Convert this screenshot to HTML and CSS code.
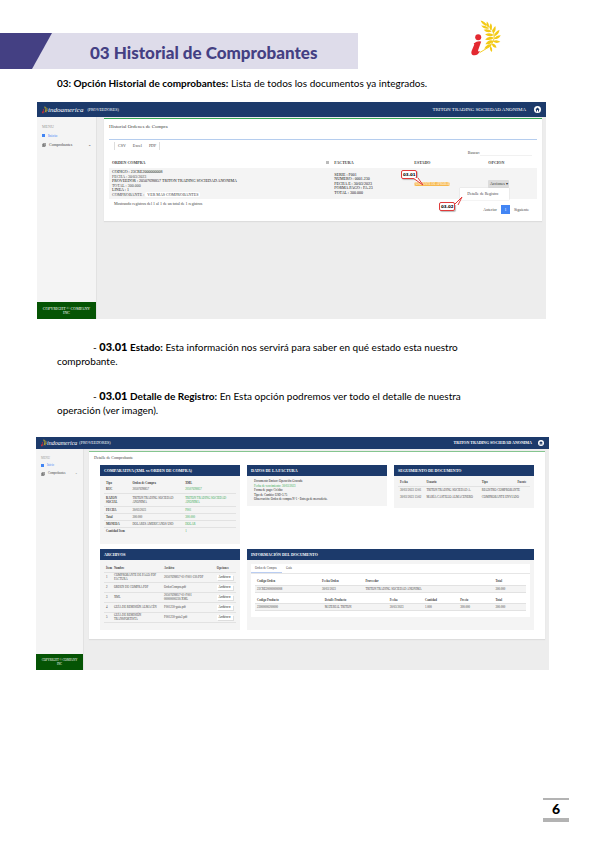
FILE: index.html
```html
<!DOCTYPE html>
<html lang="es">
<head>
<meta charset="utf-8">
<title>03 Historial de Comprobantes</title>
<link rel="stylesheet" href="styles.css">
</head>
<body>
<svg class="defs" aria-hidden="true">
  <symbol id="brand" viewBox="0 0 100 120">
    <circle cx="24" cy="56" r="10" fill="#e32931"/>
    <path d="M9 77Q22 66 34 70L24 98Q22 106 30 102Q24 116 12 116Q-2 116 2 102L11 80Z" fill="#e32931"/>
    <path d="M29 107Q88 78 76 42Q66 17 34 3" fill="none" stroke="#f3ca16" stroke-width="3"/>
    <g fill="#f3ca16">
      <path d="M32 0Q49 4 53 19Q39 16 32 0Z"/><path d="M34 17Q51 17 60 27Q44 31 34 17Z"/><path d="M42 31Q58 26 69 37Q53 44 42 31Z"/><path d="M47 47Q62 37 76 48Q62 57 47 47Z"/><path d="M47 63Q61 48 77 58Q64 69 47 63Z"/><path d="M48 79Q59 61 75 68Q64 82 48 79Z"/><path d="M44 94Q54 75 70 80Q61 94 44 94Z"/>
      <path d="M53 3Q63 12 58 25Q49 15 53 3Z"/><path d="M66 9Q74 21 66 34Q58 21 66 9Z"/><path d="M81 18Q86 33 73 43Q69 29 81 18Z"/><path d="M95 31Q94 46 77 53Q78 38 95 31Z"/><path d="M99 49Q94 62 77 62Q82 49 99 49Z"/><path d="M98 71Q85 79 73 70Q84 61 98 71Z"/><path d="M85 91Q71 91 69 77Q82 77 85 91Z"/><path d="M69 105Q60 96 64 84Q74 94 69 105Z"/>
    </g>
  </symbol>
  <symbol id="home" viewBox="0 0 14 14">
    <circle cx="7" cy="7" r="7" fill="#fff"/>
    <path d="M2.500 7L7 3L11.500 7H10V11H8V8H6V11H4V7Z" fill="#1c3a6b"/>
  </symbol>
  <symbol id="docs" viewBox="0 0 12 12">
    <path d="M4 1H11V9H4ZM1 4H8V11H1Z" fill="#ddd" stroke="#555" stroke-width="1.500"/>
    <path d="M3 7H6M3 9H6" stroke="#555"/>
  </symbol>
</svg>

<header class="top">
  <div class="banner"><h1>03 Historial de Comprobantes</h1></div>
  <svg class="logo" role="img" aria-label="Indoamerica"><use href="#brand"/></svg>
</header>

<main>
  <p class="lead"><b>03: Opción Historial de comprobantes:</b> Lista de todos los documentos ya integrados.</p>

  <section class="app app-list">
    <div class="bar">
      <svg class="mark" aria-hidden="true"><use href="#brand"/></svg>
      <span class="brand">indoamerica</span><span class="role">(PROVEEDORES)</span>
      <span class="company">TRITON TRADING SOCIEDAD ANONIMA</span>
      <svg class="home" aria-hidden="true"><use href="#home"/></svg>
    </div>
    <nav class="side">
      <span class="menu-title">MENU</span>
      <a class="active" href="#"><i class="square"></i>Inicio</a>
      <a href="#"><svg class="ico" aria-hidden="true"><use href="#docs"/></svg>Comprobantes<span class="chev">⌄</span></a>
      <div class="side-foot">COPYRIGHT © COMPANY<br>INC</div>
    </nav>
    <div class="card">
      <h2>Historial Ordenes de Compra</h2>
      <div class="list">
        <div class="exports"><button>CSV</button><button>Excel</button><button>PDF</button></div>
        <div class="search"><label for="q">Buscar:</label><input id="q" type="text"></div>
        <table class="orders">
          <colgroup><col class="w51"><col class="w18"><col class="w18"><col></colgroup>
          <thead><tr><th>ORDEN COMPRA</th><th><i class="tick"></i>FACTURA</th><th>ESTADO</th><th>OPCION</th></tr></thead>
          <tbody><tr>
            <td><div class="lines six"><b>CODIGO : 23CRE2000000008</b><span>FECHA : 30/03/2023</span><b>PROVEEDOR : 20507698857 TRITON TRADING SOCIEDAD ANONIMA</b><span>TOTAL : 300.000</span><b>LINEA : 1</b><span>COMPROBANTE : <em>VER MAS COMPROBANTES</em></span></div></td>
            <td><div class="lines five"><b>SERIE : F001</b><b>NUMERO : 0001.230</b><b>FECHA E : 30/03/2023</b><b>FORMA PAGO : FA.23</b><b>TOTAL : 300.000</b></div></td>
            <td><div class="anchor"><span class="badge">PENDIENTE DE APROBAR</span>
              <div class="callout one">03.01<svg viewBox="0 0 12 8"><path d="M1 0L11 7L6 0" fill="#fff" stroke="#e03a3a"/></svg></div></div></td>
            <td><div class="anchor"><button class="action">Acciones ▾</button>
              <div class="drop"><a href="#">Detalle de Registro</a></div>
              <div class="callout two">03.02<svg viewBox="0 0 10 10"><path d="M1 9L9 1L5 9" fill="#fff" stroke="#e03a3a"/></svg></div></div></td>
          </tr></tbody>
        </table>
        <div class="table-foot"><span>Mostrando registros del 1 al 1 de un total de 1 registros</span>
          <div class="pager"><button>Anterior</button><button class="now">1</button><button>Siguiente</button></div></div>
      </div>
    </div>
  </section>

  <p class="note">- <strong>03.01</strong> <b>Estado:</b> Esta información nos servirá para saber en qué estado esta nuestro comprobante.</p>
  <p class="note">- <strong>03.01</strong> <b>Detalle de Registro:</b> En Esta opción podremos ver todo el detalle de nuestra operación (ver imagen).</p>

  <section class="app app-detail">
    <div class="bar">
      <svg class="mark" aria-hidden="true"><use href="#brand"/></svg>
      <span class="brand">indoamerica</span><span class="role">(PROVEEDORES)</span>
      <span class="company">TRITON TRADING SOCIEDAD ANONIMA</span>
      <svg class="home" aria-hidden="true"><use href="#home"/></svg>
    </div>
    <nav class="side">
      <span class="menu-title">MENU</span>
      <a class="active" href="#"><i class="square"></i>Inicio</a>
      <a href="#"><svg class="ico" aria-hidden="true"><use href="#docs"/></svg>Comprobantes<span class="chev">⌄</span></a>
      <div class="side-foot">COPYRIGHT © COMPANY<br>INC</div>
    </nav>
    <div class="card">
      <h2>Detalle de Comprobante</h2>
      <div class="panels">
        <article class="panel tall">
          <h3>COMPARATIVA (XML vs ORDEN DE COMPRA)</h3>
          <table class="compare">
            <colgroup><col class="w20"><col class="w40"><col></colgroup>
            <thead><tr><th>Tipo</th><th>Orden de Compra</th><th>XML</th></tr></thead>
            <tbody>
              <tr><th>RUC</th><td>20507698857</td><td>20507698857</td></tr>
              <tr><th>RAZON SOCIAL</th><td>TRITON TRADING SOCIEDAD ANONIMA</td><td>TRITON TRADING SOCIEDAD ANONIMA</td></tr>
              <tr><th>FECHA</th><td>30/03/2023</td><td>F001</td></tr>
              <tr><th>Total</th><td>300.000</td><td>300.000</td></tr>
              <tr><th>MONEDA</th><td>DOLARES AMERICANOS USD</td><td>DOLAR</td></tr>
              <tr><th>Cantidad Item</th><td></td><td>1</td></tr>
            </tbody>
          </table>
        </article>
        <article class="panel">
          <h3>DATOS DE LA FACTURA</h3>
          <div class="facts"><span>Documento Emisor: Operación Gravada</span><span class="green">Fecha de vencimiento: 30/03/2023</span><span>Forma de pago: Crédito</span><span>Tipo de Cambio: USD-3.75</span><span>Observación: Orden de compra N°1 - Entrega de mercadería.</span></div>
        </article>
        <article class="panel mid">
          <h3>SEGUIMIENTO DE DOCUMENTO</h3>
          <table class="track">
            <colgroup><col class="w20"><col class="w42"><col class="w27"><col></colgroup>
            <thead><tr><th>Fecha</th><th>Usuario</th><th>Tipo</th><th>Fuente</th></tr></thead>
            <tbody><tr><td>30/03/2023 12:01</td><td>TRITON TRADING SOCIEDAD A.</td><td>REGISTRO COMPROBANTE</td><td></td></tr>
            <tr><td>30/03/2023 13:02</td><td>MARÍA CASTILLO ALMACENERO</td><td>COMPROBANTE ENVIADO</td><td></td></tr></tbody>
          </table>
        </article>
        <article class="panel files-panel">
          <h3>ARCHIVOS</h3>
          <table class="files">
            <colgroup><col class="w6"><col class="w38"><col class="w40"><col></colgroup>
            <thead><tr><th>Ítem</th><th>Nombre</th><th>Archivo</th><th>Opciones</th></tr></thead>
            <tbody>
              <tr><td>1</td><td>COMPROBANTE DE PAGO PDF FACTURA</td><td>20507698857-01-F001-230.PDF</td><td><button>Archivo ▾</button></td></tr>
              <tr><td>2</td><td>ORDEN DE COMPRA PDF</td><td>OrdenCompra.pdf</td><td><button>Archivo ▾</button></td></tr>
              <tr><td>3</td><td>XML</td><td>20507698857-01-F001 00000000230.XML</td><td><button>Archivo ▾</button></td></tr>
              <tr><td>4</td><td>GUÍA DE REMISIÓN ALMACÉN</td><td>F001230-guia.pdf</td><td><button>Archivo ▾</button></td></tr>
              <tr><td>5</td><td>GUÍA DE REMISIÓN TRANSPORTISTA</td><td>F001230-guia2.pdf</td><td><button>Archivo ▾</button></td></tr>
            </tbody>
          </table>
        </article>
        <article class="panel wide">
          <h3>INFORMACIÓN DEL DOCUMENTO</h3>
          <div class="info">
            <div class="tabs"><a class="on" href="#">Orden de Compra</a><a href="#">Guía</a></div>
            <table>
              <colgroup><col class="w24"><col class="w16"><col class="w48"><col></colgroup>
              <thead><tr><th>Codigo Orden</th><th>Fecha Orden</th><th>Proveedor</th><th>Total</th></tr></thead>
              <tbody><tr><td>23CRE20000000008</td><td>30/03/2023</td><td>TRITON TRADING SOCIEDAD ANONIMA</td><td>300.000</td></tr></tbody>
            </table>
            <table>
              <colgroup><col class="w25"><col class="w24"><col class="w13"><col class="w13"><col class="w13"><col></colgroup>
              <thead><tr><th>Codigo Producto</th><th>Detalle Producto</th><th>Fecha</th><th>Cantidad</th><th>Precio</th><th>Total</th></tr></thead>
              <tbody><tr><td>23000000200000</td><td>MATERIAL TRITON</td><td>30/03/2023</td><td>1.000</td><td>300.000</td><td>300.000</td></tr></tbody>
            </table>
          </div>
        </article>
      </div>
    </div>
  </section>
</main>
<footer><span class="page">6</span></footer>
</body>
</html>
```
FILE: styles.css
```css
* { box-sizing: border-box; }
body { margin: 0; background: #fff; color: #000; font-family: Lato, "Liberation Sans", sans-serif; font-size: 10px; }
.defs { position: absolute; width: 0; height: 0; }
h1, h2, h3, p { margin: 0; }
a { color: inherit; text-decoration: none; }
button, input { font: inherit; border: 0; margin: 0; padding: 0; }

.top { display: flex; justify-content: space-between; padding: 20px 94px 0 0; height: 69px; }
.banner { position: relative; width: 358px; height: 36px; margin-top: 13px; display: flex; align-items: center; padding: 4px 0 0 90px; background: #dedcea; }
.banner::before { content: ""; position: absolute; left: 0; top: 0; width: 52px; height: 36px; background: #444083; clip-path: polygon(0 0, 100% 0, 32px 100%, 0 100%); }
h1 { font-size: 17px; line-height: 20px; font-weight: 900; color: #444083; white-space: nowrap; }
.logo { width: 30px; height: 37px; }

.lead { margin: 7px 57px 0; line-height: 14px; }
.note { margin: 21px 110px 0 57px; line-height: 14px; text-indent: 36px; }
.note strong { font-size: 11px; font-weight: 900; }

.app { display: grid; background: #ededed; font-family: "Liberation Serif", serif; font-size: 4px; line-height: 4px; color: #444; }
.app-list { margin: 12px 49px 0 37px; grid-template: 15px 202px / 60px 1fr; }
.app-detail { margin: 20px 46px 0 36px; grid-template: 12px 221px / 48px 1fr; }
.bar { grid-column: 1 / -1; display: flex; align-items: center; background: #1c3a6b; color: #fff; padding: 0 5px; }
.mark { width: 6px; height: 8px; }
.brand { font-size: 7px; line-height: 10px; font-style: italic; }
.role { font-size: 4px; line-height: 6px; margin-left: 4px; }
.company { margin-left: auto; font-size: 5px; line-height: 6px; }
.home { width: 7px; height: 7px; margin-left: 8px; }
.app-detail .brand { font-size: 6px; }
.app-detail .role { margin-left: 2px; }
.app-detail .company { font-size: 4px; font-weight: bold; }
.app-detail .home { width: 6px; height: 6px; margin-left: 6px; }

.side { display: flex; flex-direction: column; gap: 4px; padding-top: 8px; background: #f4f4f4; border-right: 1px solid #e2e2e2; }
.menu-title { padding-left: 5px; color: #999; }
.side a { display: flex; align-items: center; gap: 3px; padding: 0 5px; line-height: 5px; }
.side .active { color: #4285f4; }
.square { width: 3px; height: 3px; background: #4285f4; }
.ico { width: 4px; height: 4px; }
.chev { margin-left: auto; }
.side-foot { margin-top: auto; height: 17px; padding-top: 5px; background: #055404; color: #fff; text-align: center; }
.app-detail .side { gap: 3px; padding-top: 7px; font-size: 3px; }
.app-detail .side-foot { height: 16px; padding-top: 4px; }

.card { background: #fff; border-top: 1px solid #34a853; box-shadow: 0 1px 1px #ddd; }
.app-list .card { margin: 1px 4px 0 7px; height: 103px; padding: 5px 5px 0; }
.app-detail .card { margin: 2px 4px 0 5px; height: 188px; padding: 3px 11px 0; border-color: #85c58f; }
h2 { font-size: 5px; line-height: 6px; font-weight: normal; }
.app-detail h2 { font-size: 4px; margin-left: -6px; }
.list { border-top: 1px solid #b5cdee; margin-top: 9px; }
.exports { display: flex; gap: 7px; width: max-content; margin: 2px 0 0 5px; padding: 0 3px; border: solid #ddd; border-width: 0 1px; line-height: 8px; }
.exports button, .pager button { background: #fff; color: inherit; }
.search { display: flex; justify-content: flex-end; align-items: center; margin-right: 5px; line-height: 6px; }
.search input { width: 52px; height: 6px; border-bottom: 1px solid #f1f1f1; }

table { width: 100%; border-collapse: collapse; table-layout: fixed; }
th, td { padding: 0; text-align: left; vertical-align: middle; }
.w6 { width: 6%; } .w13 { width: 13%; } .w16 { width: 16%; } .w18 { width: 18%; } .w20 { width: 20%; } .w24 { width: 24%; } .w25 { width: 25%; } .w27 { width: 27%; } .w38 { width: 38%; } .w40 { width: 40%; } .w42 { width: 42%; } .w48 { width: 48%; } .w51 { width: 51%; }
.orders { margin-top: 2px; }
.orders th { height: 10px; padding-left: 3px; white-space: nowrap; }
.orders td { height: 31px; padding-left: 3px; background: #f4f4f4; }
.orders th:nth-child(2), .orders td:nth-child(2), .orders th:nth-child(4), .orders td:nth-child(4) { padding-left: 7px; }
.orders th:nth-child(3), .orders td:nth-child(3) { padding-left: 10px; }
.tick { float: left; width: 3px; height: 3px; margin-left: -8px; background: #bbb; }
.lines { display: flex; flex-direction: column; justify-content: space-between; white-space: nowrap; }
.lines b { color: #111; font-weight: normal; }
.six { height: 27px; }
.five { height: 22px; }
.lines em { font-style: normal; background: #fff; border-radius: 2px; padding: 0 2px; }
.anchor { position: relative; }
.badge { display: block; width: 36px; border-radius: 2px; background: #f7b84d; color: #fff; font-size: 3px; text-align: center; white-space: nowrap; }
.action { width: 21px; height: 8px; background: #dcdcdc; border-radius: 1px; color: #333; }
.drop { position: absolute; left: -28px; top: 8px; width: 49px; height: 12px; padding: 4px 7px; background: #fff; box-shadow: 0 0 1px #bbb; white-space: nowrap; }
.callout { position: absolute; width: 16px; height: 9px; border: 1px solid #e03a3a; border-radius: 2px; background: #fff; color: #000; font: bold 4px/7px "DejaVu Sans", sans-serif; text-align: center; box-shadow: 1px 1px 1px #bbb; }
.callout svg { position: absolute; }
.one { left: -13px; top: -12px; }
.one svg { width: 12px; height: 8px; left: 10px; top: 7px; }
.two { left: -49px; top: 22px; }
.two svg { width: 10px; height: 10px; left: 13px; top: -7px; }
.table-foot { display: flex; justify-content: space-between; padding: 3px 8px 0 5px; }
.pager { display: flex; gap: 4px; padding-top: 3px; line-height: 9px; }
.pager .now { width: 9px; background: #4285f4; color: #fff; }

.panels { display: grid; grid-template-columns: repeat(3, 1fr); column-gap: 7px; row-gap: 5px; margin-top: 4px; align-items: start; }
.panel { background: #f4f4f4; padding-bottom: 5px; min-width: 0; font-size: 3px; }
.tall { min-height: 79px; }
.mid { min-height: 43px; }
.files-panel, .wide { min-height: 81px; }
.wide { grid-column: span 2; }
h3 { height: 11px; padding: 0 4px; background: #1c3a6b; color: #fff; font-size: 4px; line-height: 12px; white-space: nowrap; }
.panel table { width: calc(100% - 8px); margin: 3px 4px 0; }
.panel th, .panel td { height: 7px; padding-left: 2px; padding-right: 2px; border-bottom: 1px solid #e2e2e2; }
.compare td:last-child { color: #34a853; }
.compare tr:nth-child(2) th, .compare tr:nth-child(2) td { padding-top: 2px; padding-bottom: 2px; }
.compare tr:last-child > * { border: 0; }
.facts { display: flex; flex-direction: column; justify-content: space-between; min-height: 25px; padding: 3px 7px 0; color: #222; }
.green { color: #34a853; }
.panel .track td { white-space: nowrap; border: 0; padding-right: 0; }
.panel .files { margin-top: 4px; }
.panel .files th { height: 8px; white-space: nowrap; }
.panel .files td { height: 10px; padding-right: 0; }
.files button { width: 16px; height: 5px; background: #fff; font-size: 3px; line-height: 5px; box-shadow: 1px 1px 0 #ddd; display: block; }
.info { margin: 4px 4px 0; min-height: 53px; background: #fff; }
.tabs { display: flex; border-bottom: 1px solid #e6e6e6; line-height: 8px; }
.tabs a { padding: 0 4px; }
.tabs .on { width: 31px; border-bottom: 1px solid #b9cdf2; }
.panel .info table { margin-top: 4px; }
.info td { background: #f4f4f4; }

footer { display: flex; justify-content: flex-end; padding: 128px 26px 0 0; }
.page { width: 26px; border-top: 2px solid #b3b3b3; border-bottom: 4px solid #b3b3b3; text-align: center; font-size: 14px; font-weight: 900; line-height: 18px; color: #000; }
```
